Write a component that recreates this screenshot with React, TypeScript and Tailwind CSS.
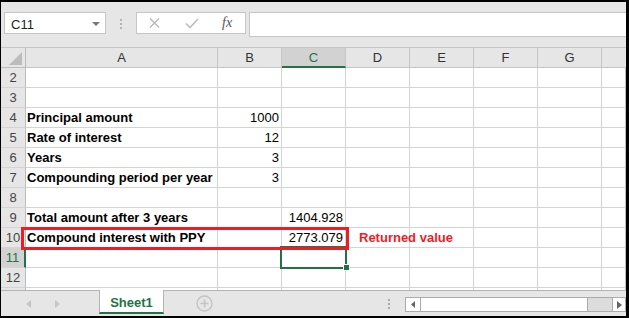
import React from 'react';

type Row = { n: number; a?: string; b?: string; c?: string; note?: string };

const ROWS: Row[] = [
  { n: 2 },
  { n: 3 },
  { n: 4, a: 'Principal amount', b: '1000' },
  { n: 5, a: 'Rate of interest', b: '12' },
  { n: 6, a: 'Years', b: '3' },
  { n: 7, a: 'Compounding period per year', b: '3' },
  { n: 8 },
  { n: 9, a: 'Total amount after 3 years', c: '1404.928' },
  { n: 10, a: 'Compound interest with PPY', c: '2773.079', note: 'Returned value' },
  { n: 11 },
  { n: 12 },
];

const SELECTED_ROW = 11;
const grid = 'shrink-0 border-b border-r border-[#d4d4d4]';

const FormulaBar = () => (
  <div className="flex h-[45px] shrink-0 items-start bg-[#e6e6e6] pl-[3px] pt-[10px]">
    {/* name box */}
    <div className="flex h-[22px] w-[102px] items-start justify-between border border-[#c6c6c6] bg-white pl-[6px] pr-[5px] pt-[3px] text-[13px] leading-[18px] text-[#222]">
      <span>C11</span>
      <svg width="8" height="5" className="mt-[6px]">
        <polygon points="0,0 8,0 4,4" fill="#777" />
      </svg>
    </div>
    <div className="mx-[14px] mt-[7px] flex flex-col gap-[2px]">
      <div className="h-[2px] w-[2px] bg-[#b4b4b4]" />
      <div className="h-[2px] w-[2px] bg-[#b4b4b4]" />
      <div className="h-[2px] w-[2px] bg-[#b4b4b4]" />
    </div>
    {/* cancel / enter / function */}
    <div className="flex h-[22px] w-[110px] items-center border border-[#c6c6c6] bg-white pl-[12px]">
      <svg width="11" height="10">
        <path d="M1 0.5 L10 9.5 M10 0.5 L1 9.5" stroke="#b8b8b8" strokeWidth="1.4" />
      </svg>
      <svg width="14" height="11" className="ml-[25px]">
        <path d="M1 5.5 L5 9.5 L13 1" stroke="#bdbdbd" strokeWidth="1.6" fill="none" />
      </svg>
      <span className="ml-[23px] font-['Liberation_Serif',serif] text-[14px] italic leading-none text-[#555]">fx</span>
    </div>
    <div className="ml-[3px] h-[25px] flex-1 border-y border-l border-[#c6c6c6] bg-white" />
  </div>
);

const ColumnHeader = () => {
  const head = 'shrink-0 border-b border-r border-[#c6c6c6] text-center leading-[19px]';
  return (
    <div className="flex h-[21px] shrink-0 border-t border-[#c6c6c6] bg-[#e6e6e6] text-[13px] text-[#333]">
      <div className="w-[25px] shrink-0 border-b border-r border-[#bdbdbd]">
        <svg width="24" height="19">
          <polygon points="21,4 21,17 8,17" fill="#bcbcbc" />
        </svg>
      </div>
      <div className={`w-[192px] ${head}`}>A</div>
      <div className={`w-[64px] ${head}`}>B</div>
      <div className="w-[64px] shrink-0 border-b-2 border-r border-b-[#217346] border-r-[#c6c6c6] bg-[#d2d2d2] text-center leading-[19px] text-[#217346]">
        C
      </div>
      <div className={`w-[64px] ${head}`}>D</div>
      <div className={`w-[64px] ${head}`}>E</div>
      <div className={`w-[64px] ${head}`}>F</div>
      <div className={`w-[64px] ${head}`}>G</div>
      <div className="flex-1 border-b border-[#c6c6c6]" />
    </div>
  );
};

const SheetRow = ({ row }: { row: Row }) => {
  const sel = row.n === SELECTED_ROW;
  return (
    <div className="flex h-[20px] shrink-0 text-[13px] text-black">
      <div
        className={
          sel
            ? 'w-[25px] shrink-0 border-b border-r-2 border-b-[#d4d4d4] border-r-[#217346] bg-[#d2d2d2] text-center leading-[19px] text-[#217346]'
            : 'w-[25px] shrink-0 border-b border-r border-b-[#d4d4d4] border-r-[#bdbdbd] bg-[#e6e6e6] text-center leading-[19px] text-[#444]'
        }
      >
        {row.n}
      </div>
      <div className={`w-[192px] ${grid} whitespace-nowrap pl-px pt-px font-bold leading-[18px]`}>{row.a}</div>
      <div className={`w-[64px] ${grid} pr-[2px] pt-px text-right leading-[18px]`}>{row.b}</div>
      <div className={`w-[64px] ${grid} pr-[2px] pt-px text-right leading-[18px]`}>{row.c}</div>
      <div className={`w-[64px] ${grid} overflow-visible whitespace-nowrap pl-[13px] pt-px font-bold leading-[18px] text-[#ee1c25]`}>
        {row.note}
      </div>
      <div className={`w-[64px] ${grid}`} />
      <div className={`w-[64px] ${grid}`} />
      <div className={`w-[64px] ${grid}`} />
      <div className="flex-1 border-b border-r border-b-[#d4d4d4] border-r-[#bdbdbd]" />
    </div>
  );
};

const TabBar = () => (
  <div className="flex h-[26px] shrink-0 border-t border-[#b4b4b4] bg-[#e6e6e6]">
    <div className="flex w-[98px] shrink-0 items-start gap-[24px] pl-[25px] pt-[9px]">
      <svg width="5" height="8">
        <polygon points="5,0 5,8 0,4" fill="#c6c6c6" />
      </svg>
      <svg width="5" height="8">
        <polygon points="0,0 0,8 5,4" fill="#c6c6c6" />
      </svg>
    </div>
    <div className="-mt-px h-[24px] w-[65px] shrink-0 border-x border-b-2 border-x-[#b4b4b4] border-b-[#217346] bg-white pt-[4px] text-center text-[13px] font-bold leading-[18px] text-[#217346]">
      Sheet1
    </div>
    <svg width="17" height="17" className="ml-[32px] mt-[4px] shrink-0">
      <circle cx="8.5" cy="8.5" r="7.5" stroke="#c4c4c4" strokeWidth="1.4" fill="none" />
      <path d="M8.5 4.5 V12.5 M4.5 8.5 H12.5" stroke="#c4c4c4" strokeWidth="1.6" />
    </svg>
    <div className="flex-1" />
    <div className="mt-[8px] flex flex-col gap-[2px]">
      <div className="h-[2px] w-[2px] bg-[#a8a8a8]" />
      <div className="h-[2px] w-[2px] bg-[#a8a8a8]" />
      <div className="h-[2px] w-[2px] bg-[#a8a8a8]" />
    </div>
    {/* horizontal scroll bar */}
    <div className="ml-[15px] mt-[6px] flex h-[15px] w-[221px] shrink-0 border border-[#ababab] bg-white">
      <div className="flex w-[15px] shrink-0 items-center justify-center border-r border-[#ababab]">
        <svg width="4" height="7">
          <polygon points="4,0 4,7 0,3.5" fill="#666" />
        </svg>
      </div>
      <div className="w-[167px] shrink-0 border-r border-[#ababab] bg-white" />
      <div className="w-[24px] shrink-0 bg-[#dcdcdc]" />
      <div className="flex flex-1 items-center justify-center border-l border-[#ababab]">
        <svg width="5" height="8">
          <polygon points="0,0 0,8 5,4" fill="#666" />
        </svg>
      </div>
    </div>
  </div>
);

export default function App() {
  return (
    <div className="relative flex h-[318px] w-[629px] flex-col overflow-hidden border-b-2 border-l border-r-[3px] border-t-2 border-black bg-white font-['Liberation_Sans',Arial,sans-serif]">
      <FormulaBar />
      <ColumnHeader />
      {ROWS.map((r) => (
        <SheetRow key={r.n} row={r} />
      ))}
      {/* partly visible row 13 */}
      <div className="flex h-[2px] shrink-0">
        <div className="w-[25px] shrink-0 border-r border-[#bdbdbd] bg-[#e6e6e6]" />
        <div className="w-[192px] shrink-0 border-r border-[#d4d4d4]" />
        <div className="w-[64px] shrink-0 border-r border-[#d4d4d4]" />
        <div className="w-[64px] shrink-0 border-r border-[#d4d4d4]" />
        <div className="w-[64px] shrink-0 border-r border-[#d4d4d4]" />
        <div className="w-[64px] shrink-0 border-r border-[#d4d4d4]" />
        <div className="w-[64px] shrink-0 border-r border-[#d4d4d4]" />
        <div className="w-[64px] shrink-0 border-r border-[#d4d4d4]" />
        <div className="flex-1 border-r border-[#bdbdbd]" />
      </div>
      <TabBar />

      {/* active cell C11 */}
      <div className="absolute left-[279px] top-[244px] h-[23px] w-[67px] border-2 border-[#217346]" />
      <div className="absolute left-[342px] top-[262px] h-[7px] w-[7px] border border-white bg-[#217346]" />
      {/* annotation box around row 10 */}
      <div className="absolute left-[20px] top-[225px] h-[23px] w-[328px] border-[3px] border-[#ee1c25]" />
    </div>
  );
}
